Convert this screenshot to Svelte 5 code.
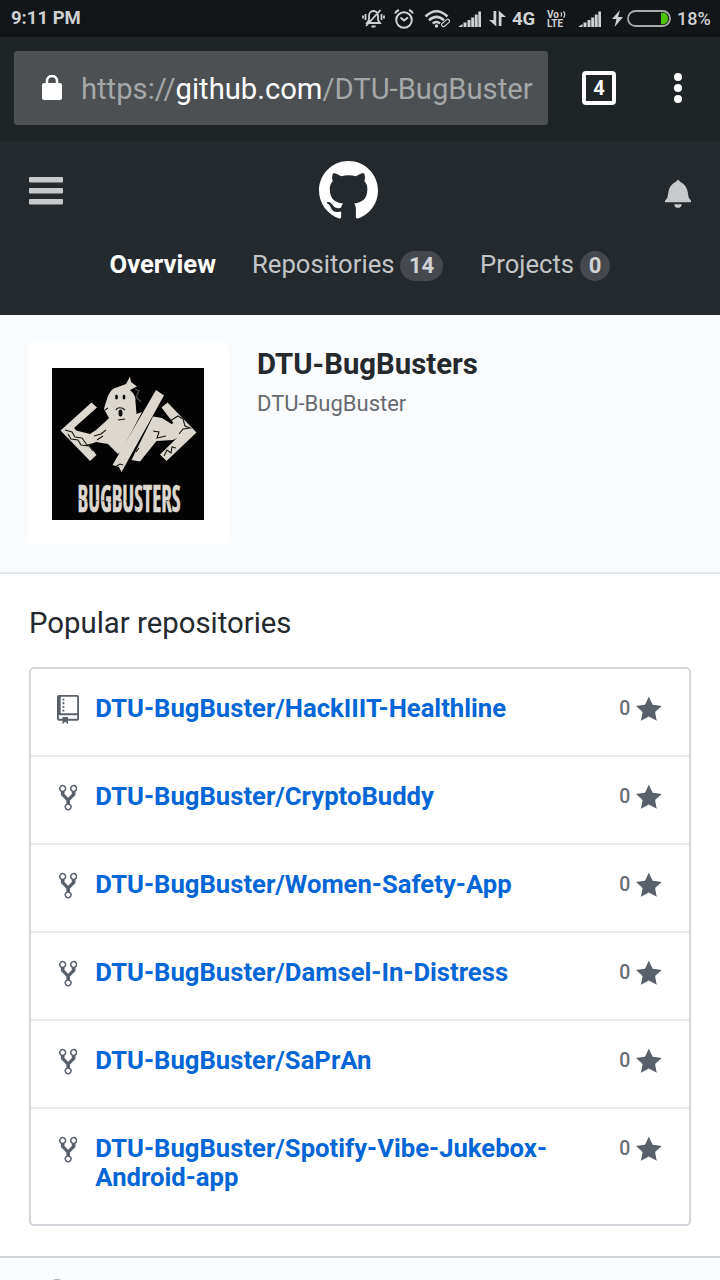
<script>
  const repos = [
    { name: 'DTU-BugBuster/HackIIIT-Healthline', fork: false },
    { name: 'DTU-BugBuster/CryptoBuddy', fork: true },
    { name: 'DTU-BugBuster/Women-Safety-App', fork: true },
    { name: 'DTU-BugBuster/Damsel-In-Distress', fork: true },
    { name: 'DTU-BugBuster/SaPrAn', fork: true },
    { name: 'DTU-BugBuster/Spotify-Vibe-Jukebox-Android-app', fork: true }
  ];
</script>

{#snippet signal()}
  <svg width="24" height="18" viewBox="0 0 24 18" fill="currentColor">
    <path d="M0 17l4.500-3v3zM5.500 12.500h3V17h-3zM9.500 10h3v7h-3zM13.200 7.500h3V17h-3zM16.800 4.500h2.900V17h-2.900zM20.300 1.500h2.700V17h-2.700z" />
  </svg>
{/snippet}

<div class="screen">
  <div class="status">
    <span class="time">9:11 PM</span>
    <svg class="mute" width="23" height="21" viewBox="0 0 23 21" fill="none" stroke="currentColor" stroke-width="1.800">
      <path d="M5 15h13l-2-3V8c0-3-2-5-4.500-5S7 5 7 8v4zM9.500 18.500h4M3.500 6v6M1 7.500v3M19.500 6v6M22 7.500v3M4 18L18.500 2" />
    </svg>
    <svg class="alarm" width="22" height="22" viewBox="0 0 22 22" fill="none" stroke="currentColor" stroke-width="2">
      <circle cx="11" cy="12" r="7.800" /><path d="M7.500 9.500l3.500 3 4-3M2 5.500Q3 3 6 2M20 5.500Q19 3 16 2" />
    </svg>
    <svg class="wifi" width="26" height="20" viewBox="0 0 26 20" fill="none" stroke="currentColor" stroke-width="2.600">
      <path d="M1.500 7.500Q12.500-3 23.500 7.500M5 11.200Q12.500 4.500 20 11.200M8.700 14.500Q12.500 11.500 16 14.500" />
      <circle cx="12.500" cy="17" r="1" stroke-width="1.500" fill="currentColor" />
      <rect x="17" y="12.500" width="9" height="3.600" rx="1.500" transform="rotate(-40 21 14)" stroke-width="1.200" />
    </svg>
    <span class="sig-one">{@render signal()}</span>
    <svg class="arrows" width="17" height="17" viewBox="0 0 17 17" fill="currentColor">
      <path d="M4.500 1h2.800v15.500L0 10h4.500zM9.700 16V.5L17 7h-4.500v9z" />
    </svg>
    <span class="net">4G</span>
    <span class="volte"><span>Vo<svg width="6" height="7" viewBox="0 0 6 7" fill="none" stroke="currentColor" stroke-width="1.200"><path d="M.8 1.500Q2.500 3.500.8 5.500M3.500.3Q6 3.500 3.500 6.700" /></svg></span><span>LTE</span></span>
    <span class="sig-two">{@render signal()}</span>
    <svg class="bolt" width="11" height="17" viewBox="0 0 11 17" fill="currentColor">
      <path d="M8 0L0 9h4.500L2.500 17 11 7H6z" />
    </svg>
    <svg class="battery" width="44" height="17" viewBox="0 0 44 17">
      <rect x="1" y="1" width="42" height="15" rx="7.500" fill="none" stroke="#aaa" stroke-width="1.800" />
      <path d="M34 2.800h2a5.800 5.800 0 0 1 0 11.500h-2z" fill="#4bc500" />
    </svg>
    <span class="pct">18%</span>
  </div>

  <div class="browser">
    <div class="url">
      <svg width="20" height="27" viewBox="0 0 20 27">
        <path d="M5 10V6a5 5 0 0 1 10 0V10" fill="none" stroke="#fff" stroke-width="2.500" />
        <rect y="8" width="20" height="17" rx="2" fill="#fff" />
      </svg>
      <span class="address">https://<b>github.com</b>/DTU-BugBuster</span>
    </div>
    <span class="tabs">4</span>
    <svg class="more" width="8" height="30" viewBox="0 0 8 30" fill="#fff">
      <circle cx="4" cy="4" r="4" /><circle cx="4" cy="15" r="4" /><circle cx="4" cy="26" r="4" />
    </svg>
  </div>

  <header>
    <div class="bar">
      <svg class="burger" width="34" height="28" viewBox="0 0 34 28" fill="#c8c9ca">
        <rect width="34" height="5.500" rx="1" /><rect y="11" width="34" height="5.500" rx="1" /><rect y="22" width="34" height="5.500" rx="1" />
      </svg>
      <svg class="mark" width="59" height="59" viewBox="0 0 16 16" fill="#fff">
        <path d="M8 0C3.580 0 0 3.580 0 8c0 3.540 2.290 6.530 5.470 7.590.4.070.55-.17.55-.38 0-.19-.01-.82-.01-1.490-2.010.37-2.530-.49-2.690-.94-.09-.23-.48-.94-.82-1.130-.28-.15-.68-.52-.01-.53.63-.01 1.080.58 1.230.82.72 1.210 1.870.87 2.330.66.07-.52.28-.87.51-1.070-1.780-.2-3.640-.89-3.640-3.950 0-.87.31-1.590.82-2.150-.08-.2-.36-1.020.08-2.120 0 0 .67-.21 2.200.82.64-.18 1.320-.27 2-.27.68 0 1.360.09 2 .27 1.530-1.040 2.200-.82 2.200-.82.44 1.100.16 1.920.08 2.120.51.56.82 1.270.82 2.150 0 3.070-1.870 3.750-3.650 3.950.29.25.54.73.54 1.480 0 1.070-.01 1.930-.01 2.200 0 .21.15.46.55.38A8.013 8.013 0 0 0 16 8c0-4.420-3.580-8-8-8z" />
      </svg>
      <svg class="bell" width="26" height="30" viewBox="0 0 14 16" fill="#c8c9ca">
        <path d="M14 12v1H0v-1l.73-.58c.77-.77.81-2.550 1.190-4.420C2.690 3.230 6 2 6 2c0-.55.45-1 1-1s1 .45 1 1c0 0 3.390 1.230 4.160 5 .38 1.880.42 3.660 1.190 4.420l.66.58H14zm-7 4c1.110 0 2-.89 2-2H5c0 1.110.89 2 2 2z" />
      </svg>
    </div>
    <nav>
      <span class="active">Overview</span>
      <span class="repos-tab">Repositories</span><span class="pill fourteen">14</span>
      <span class="projects-tab">Projects</span><span class="pill zero">0</span>
    </nav>
  </header>

  <section class="profile">
    <div class="avatar">
      <svg width="152" height="152" viewBox="0 0 152 152">
        <rect width="152" height="152" fill="#030303" />
        <g fill="#ddd8cf">
          <path d="M39.500 34.500L45 39.500 22 60 36 76 44.500 87 38 93 8.500 62.500z" />
          <path d="M18 61L38 66 44 62 53 54 57 50 52 41 53 37 56 28 Q59 20 66 19 L74 16 78 8.500 79 14 85 18.500 78 22 Q84 27 83.500 34 L84.500 46 90 44 69.500 83 66 86 56 76 44 74 34 78z" />
          <path d="M104 22L112 27.500 69.500 104 67 99 60.500 97z" />
          <path d="M101 48.500L110 50 119.500 56 127 52 133 58 131 67 121 72 104.500 73 88 93.500 79.500 92z" />
          <path d="M109.500 39.500L115.500 34.500 144.500 64.500 114.500 93 108 86.500 129.500 65.500z" />
        </g>
        <g fill="#090909">
          <ellipse cx="64.500" cy="29" rx="1.400" ry="2.500" /><ellipse cx="72" cy="29" rx="1.400" ry="2.500" /><ellipse cx="68.500" cy="45" rx="2" ry="3.500" />
        </g>
        <path d="M13 62l7 2 3 5 7 1 5 7 5-1M16 66l3 5 7 1 3 5 8 1 4 5M42 68l7-2 5-4M45 72l6-4M118 53l8-5 5 3 2 7 5 2-7 1-4 5M101 63l6 1-2 6 9-2M112 88l3-6 4 3 1-6 4 1M64 42c1-3 6-3 9 0M66 52l7-1M53 42l3-2M63 99l5-3 3 1M84 84l3-4" fill="none" stroke="#16140f" stroke-width="1.100" />
        <path d="M83 21l4 2-3 6 5 5" fill="none" stroke="#55514b" stroke-width="1.200" />
        <text x="25.500" y="144" textLength="103" lengthAdjust="spacingAndGlyphs">BUGBUSTERS</text>
        <path d="M27 131l9 3 12-2 12 3 14-2 16 1 17-2 20 2" fill="none" stroke="#111" stroke-width=".8" stroke-dasharray="3 5" />
      </svg>
    </div>
    <div class="who">
      <h1>DTU-BugBusters</h1>
      <p>DTU-BugBuster</p>
    </div>
  </section>

  <main>
    <h2>Popular repositories</h2>
    <ul>
      {#each repos as repo}
        <li>
          <span class="kind">
            {#if repo.fork}
              <svg width="18.330" height="29.330" viewBox="0 0 10 16"><path fill-rule="evenodd" d="M8 1a1.993 1.993 0 0 0-1 3.720V6L5 8 3 6V4.720A1.993 1.993 0 0 0 2 1a1.993 1.993 0 0 0-1 3.720V6.500l3 3v1.780A1.993 1.993 0 0 0 5 15a1.993 1.993 0 0 0 1-3.720V9.500l3-3V4.720A1.993 1.993 0 0 0 8 1zM2 4.200C1.340 4.200.8 3.650.8 3c0-.65.55-1.200 1.200-1.200.65 0 1.200.55 1.200 1.200 0 .65-.55 1.200-1.200 1.200zm3 10c-.66 0-1.200-.55-1.200-1.200 0-.65.55-1.200 1.200-1.200.65 0 1.200.55 1.200 1.200 0 .65-.55 1.200-1.200 1.200zm3-10c-.66 0-1.200-.55-1.200-1.200 0-.65.55-1.200 1.200-1.200.65 0 1.200.55 1.200 1.200 0 .65-.55 1.200-1.200 1.200z" /></svg>
            {:else}
              <svg width="22" height="29.330" viewBox="0 0 12 16"><path fill-rule="evenodd" d="M4 9H3V8h1v1zm0-3H3v1h1V6zm0-2H3v1h1V4zm0-2H3v1h1V2zm8-1v12c0 .55-.45 1-1 1H6v2l-1.500-1.500L3 16v-2H1c-.55 0-1-.45-1-1V1c0-.55.45-1 1-1h10c.55 0 1 .45 1 1zm-1 10H1v2h2v-1h3v1h5v-2zm0-10H2v9h9V1z" /></svg>
            {/if}
          </span>
          <a href="#repo">{repo.name}</a>
          <span class="stars">0</span>
          <svg class="star" width="25.670" height="29.330" viewBox="0 0 14 16"><path d="M14 6l-4.900-.64L7 1 4.900 5.360 0 6l3.600 3.260L2.670 14 7 11.670 11.330 14l-.93-4.740z" /></svg>
        </li>
      {/each}
    </ul>
  </main>
  <footer><i></i></footer>
</div>

<style>
  .screen { width: 720px; height: 1280px; overflow: hidden; display: flex; flex-direction: column; background: #fff; color: #24292e; font-family: Roboto, sans-serif; }
  .screen * { box-sizing: border-box; }
  svg { display: block; flex: none; }
  .status { height: 37px; flex: none; display: flex; align-items: center; background: #121619; color: #d0d1d2; padding-left: 11px; white-space: nowrap; }
  .status > * { flex: none; }
  .time { width: 351px; font-size: 18.500px; font-weight: 700; line-height: 37px; }
  .alarm { margin-left: 8px; }
  .wifi { margin-left: 9px; }
  .sig-one { margin-left: 8px; }
  .arrows { margin-left: 7px; }
  .net { font-size: 18.500px; font-weight: 700; margin-left: 6px; width: 25px; }
  .volte { margin-left: 10px; width: 20px; display: flex; flex-direction: column; font-size: 10px; line-height: 9px; font-weight: 700; }
  .volte svg { display: inline-block; margin-left: 1px; }
  .sig-two { margin-left: 11px; }
  .bolt { margin-left: 10px; }
  .battery { margin-left: 4px; }
  .pct { font-size: 18px; font-weight: 500; margin-left: 6px; }

  .browser { height: 104px; flex: none; display: flex; align-items: center; background: #1f2427; padding: 0 38px 2px 14px; }
  .url { width: 534px; height: 74px; display: flex; align-items: center; background: #4c5052; border-radius: 3px; padding-left: 28px; }
  .address { margin: 1px 0 0 19px; font-size: 29.200px; line-height: 40px; color: #a4a7a8; white-space: nowrap; }
  .address b { color: #fff; font-weight: 400; }
  .tabs { margin-left: 34px; width: 34px; height: 34px; border: 4px solid #fff; border-radius: 4px; color: #fff; font: 700 20px/26px Roboto, sans-serif; text-align: center; }
  .more { margin-left: auto; }

  header { height: 174px; flex: none; background: #24292e; }
  .bar { height: 99px; display: flex; align-items: center; padding: 0 29px; }
  .mark { margin-left: 256px; }
  .bell { margin: 4px 0 0 auto; }
  nav { display: flex; align-items: center; height: 48px; padding-left: 109.500px; font-size: 25.670px; color: #c3c5c6; white-space: nowrap; }
  .active { width: 142.500px; color: #fff; font-weight: 700; }
  .repos-tab { width: 148px; }
  .projects-tab { width: 100px; margin-left: 37px; }
  .pill { height: 30px; margin-top: 3px; border-radius: 15px; background: #45494e; color: #d2d3d5; font-size: 22px; line-height: 30px; font-weight: 700; text-align: center; }
  .fourteen { width: 43px; }
  .zero { width: 30px; }

  .profile { height: 259px; flex: none; display: flex; background: #fafbfc; border-bottom: 2px solid #e1e4e8; padding: 28px; }
  .avatar { width: 201px; height: 201px; background: #fff; border-radius: 5px; padding: 25px 24px; }
  .avatar svg { overflow: visible; }
  .avatar text { fill: #ddd8cf; stroke: #ddd8cf; stroke-width: .6px; font: 700 37px "Open Sans Condensed", "Liberation Sans", sans-serif; }
  .who { margin-left: 28px; }
  h1 { margin: 1px 0 0; font-size: 29.330px; line-height: 40px; font-weight: 700; }
  p { margin: 3px 0 0; font-size: 22px; line-height: 34px; color: #666a70; }

  main { padding: 30px 29px; height: 682px; flex: none; }
  h2 { margin: 0 0 25px; font-size: 29.330px; line-height: 38px; font-weight: 400; }
  ul { list-style: none; margin: 0; padding: 0; height: 559px; border: 2px solid #d1d5da; border-radius: 5px; }
  li { display: flex; align-items: flex-start; height: 88px; padding: 25px 27px 0 26px; border-bottom: 2px solid #eaecef; }
  li:last-child { height: auto; border: 0; }
  .kind { width: 22px; display: flex; justify-content: center; margin-top: 1px; }
  li svg { fill: #586069; }
  a { margin-left: 16.300px; width: 490px; font-size: 25.670px; line-height: 29.330px; font-weight: 700; color: #0366d6; text-decoration: none; }
  .stars { margin-left: auto; font-size: 19.500px; line-height: 29px; font-weight: 500; color: #6a6d72; }
  .star { margin-left: 6px; margin-top: 1px; }

  footer { flex: 1; border-top: 2px solid #d1d5da; background: #fafbfc; display: flex; overflow: hidden; padding: 21px 0 0 49px; }
  footer i { width: 16px; height: 16px; flex: none; border: 2px solid #aaa; border-radius: 50%; }
</style>
